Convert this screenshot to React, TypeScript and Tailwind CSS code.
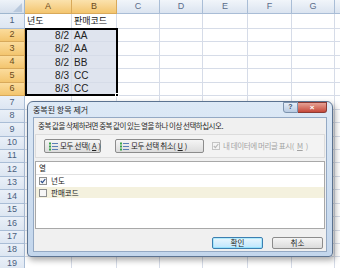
import React from 'react';

const cols = [
  { l: 'A', w: 'w-[47px]', sel: true },
  { l: 'B', w: 'w-[45px]', sel: true },
  { l: 'C', w: 'w-[43px]', sel: false },
  { l: 'D', w: 'w-[43px]', sel: false },
  { l: 'E', w: 'w-[45px]', sel: false },
  { l: 'F', w: 'w-[44px]', sel: false },
  { l: 'G', w: 'w-[43px]', sel: false },
];

const data: Record<number, [string, string]> = {
  1: ['년도', '판매코드'],
  2: ['8/2', 'AA'],
  3: ['8/2', 'AA'],
  4: ['8/2', 'BB'],
  5: ['8/3', 'CC'],
  6: ['8/3', 'CC'],
};

const kr = "font-['Noto_Sans_CJK_KR',sans-serif]";

const ListIcon = () => (
  <svg width="9" height="9" viewBox="0 0 9 9" className="shrink-0">
    <rect x="0" y="0.5" width="2" height="2" fill="#3aa34a" />
    <rect x="0" y="3.5" width="2" height="2" fill="#3aa34a" />
    <rect x="0" y="6.5" width="2" height="2" fill="#3aa34a" />
    <rect x="3" y="1" width="6" height="1" fill="#5b7fb5" />
    <rect x="3" y="4" width="6" height="1" fill="#5b7fb5" />
    <rect x="3" y="7" width="6" height="1" fill="#5b7fb5" />
  </svg>
);

const Check = ({ checked, disabled }: { checked?: boolean; disabled?: boolean }) => (
  <div
    className={`w-[8px] h-[8px] border flex items-center justify-center shrink-0 ${
      disabled ? 'border-[#c4c4c4] bg-[#f4f4f4]' : 'border-[#8e8f8f] bg-[#f6f6f6]'
    }`}
  >
    {checked && (
      <svg width="6" height="6" viewBox="0 0 6 6">
        <path d="M0.8 3 L2.4 4.7 L5.3 1" stroke={disabled ? '#b8b8b8' : '#2b4d8a'} strokeWidth="1.2" fill="none" />
      </svg>
    )}
  </div>
);

const Row = ({ n, h }: { n: number; h: string }) => {
  const rowSel = n >= 2 && n <= 6;
  const d = data[n];
  return (
    <div className={`flex ${h}`}>
      <div
        className={`w-[25px] shrink-0 flex items-center justify-center text-[9px] border-r border-b ${
          rowSel
            ? 'bg-gradient-to-b from-[#fbdc9c] to-[#f3c56e] text-[#6b4a1c] border-[#d8a95a]'
            : 'bg-gradient-to-b from-[#eaf0f8] to-[#dde6f2] text-[#4a5f80] border-[#a9bdd6]'
        }`}
      >
        {n}
      </div>
      {cols.map((c, i) => (
        <div
          key={c.l}
          className={`${c.w} shrink-0 border-r border-b border-[#d6dce8] flex items-center px-[2px] overflow-hidden whitespace-nowrap ${
            rowSel && i < 2 ? 'bg-[#dfe4ee]' : 'bg-white'
          } ${i === 0 && n > 1 ? 'justify-end' : ''}`}
        >
          {d && i < 2 && (
            <span className={n === 1 ? `text-[9px] text-[#222] ${kr}` : 'text-[10px] text-[#222]'}>{d[i]}</span>
          )}
        </div>
      ))}
      <div className="flex-1 bg-white border-b border-[#d6dce8]" />
    </div>
  );
};

const App: React.FC = () => {
  const rows = Array.from({ length: 18 }, (_, i) => i + 2);
  return (
    <div className="relative w-[340px] h-[268px] overflow-hidden bg-white font-['Liberation_Sans',sans-serif]">
      {/* Sheet */}
      <div className="flex flex-col">
        <div className="flex h-[14px]">
          <div className="w-[25px] shrink-0 bg-gradient-to-b from-[#eef3f9] to-[#d5dfec] border-r border-b border-[#9eb6ce] flex items-end justify-end">
            <div className="w-0 h-0 border-l-[9px] border-l-transparent border-b-[9px] border-b-[#b9c9dd] mr-[2px] mb-[1px]" />
          </div>
          {cols.map((c) => (
            <div
              key={c.l}
              className={`${c.w} shrink-0 flex items-center justify-center text-[9px] border-r border-b ${
                c.sel
                  ? 'bg-gradient-to-b from-[#fbe2ad] to-[#f3c56e] text-[#6b4a1c] border-[#d8a95a]'
                  : 'bg-gradient-to-b from-[#f1f5fa] to-[#dbe4f0] text-[#5a6d8a] border-[#a9bdd6]'
              }`}
            >
              {c.l}
            </div>
          ))}
          <div className="flex-1 bg-gradient-to-b from-[#f1f5fa] to-[#dbe4f0] border-b border-[#a9bdd6]" />
        </div>
        <Row n={1} h="h-[15px]" />
        {rows.map((n) => (
          <Row key={n} n={n} h="h-[13.44px]" />
        ))}
      </div>

      {/* Selection frame */}
      <div className="absolute left-[25px] top-[28px] w-[93px] h-[68px] border-2 border-black" />
      <div className="absolute left-[115px] top-[93px] w-[4px] h-[4px] bg-black border border-white" />

      {/* Dialog */}
      <div className="absolute left-[27px] top-[101px] w-[306px] h-[156px] rounded-t-[6px] rounded-b-[4px] border border-[#5c7391] bg-gradient-to-b from-[#dde9f6] to-[#c3d6ec] shadow-[2px_3px_6px_rgba(0,0,0,0.35)] flex flex-col px-[5px] pb-[4px]">
        <div className="h-[15px] flex items-center shrink-0">
          <span className={`text-[8px] text-[#1c1c1c] ${kr}`}>중복된 항목 제거</span>
          <div className="ml-auto flex self-start">
            <div className="w-[15px] h-[11px] rounded-bl-[3px] border border-[#7d93ae] bg-gradient-to-b from-[#e6eef8] to-[#b9cbe2] flex items-center justify-center text-[7px] text-[#3b4f6b] font-bold">
              ?
            </div>
            <div className="w-[29px] h-[11px] rounded-br-[3px] border border-l-0 border-[#8b3a34] bg-gradient-to-b from-[#e5a195] to-[#c5473a] flex items-center justify-center text-[8px] text-white font-bold">
              ×
            </div>
          </div>
        </div>
        <div className={`flex-1 bg-[#f0f0f0] border border-[#94a9c4] flex flex-col px-[1px] ${kr}`}>
          <div className="h-[16px] pl-[3px] pt-[2px] text-[7.5px] tracking-[-0.5px] text-[#2a2a2a] whitespace-nowrap">
            중복 값을 삭제하려면 중복 값이 있는 열을 하나 이상 선택하십시오.
          </div>
          <div className="h-[24px] border border-[#dcdcdc] bg-[#f3f3f3] flex items-center pl-[8px]">
            <div className="w-[57px] h-[14px] rounded-[2px] border border-[#8c8c8c] bg-gradient-to-b from-[#f5f5f5] to-[#dcdcdc] flex items-center pl-[4px] gap-[2px] text-[7.5px] tracking-[-0.3px] text-[#222] whitespace-nowrap">
              <ListIcon />
              모두 선택(<span className="underline">A</span>)
            </div>
            <div className="ml-[14px] w-[89px] h-[14px] rounded-[2px] border border-[#8c8c8c] bg-gradient-to-b from-[#f5f5f5] to-[#dcdcdc] flex items-center pl-[4px] gap-[2px] text-[7.5px] tracking-[-0.3px] text-[#222] whitespace-nowrap">
              <ListIcon />
              모두 선택 취소(<span className="underline">U</span>)
            </div>
            <div className="ml-[8px] flex items-center gap-[3px] text-[7.5px] tracking-[-0.4px] text-[#a3a3a3] whitespace-nowrap">
              <Check checked disabled />
              내 데이터에 머리글 표시(<span className="underline">M</span>)
            </div>
          </div>
          <div className="mt-[3px] h-[68px] bg-white border border-[#a8a8a8] flex flex-col text-[7.5px] text-[#222]">
            <div className="h-[13px] border-b border-[#e2e2e2] flex items-center pl-[3px]">열</div>
            <div className="h-[12px] flex items-center pl-[3px] gap-[4px]">
              <Check checked />
              년도
            </div>
            <div className="h-[11px] flex items-center pl-[3px] gap-[4px] bg-[#f4f1de]">
              <Check />
              판매코드
            </div>
          </div>
          <div className="mt-[8px] flex justify-end gap-[9px] pr-[2px]">
            <div className="w-[51px] h-[12px] rounded-[2px] border border-[#3c7fb1] bg-gradient-to-b from-[#eaf6fd] to-[#bee6fd] shadow-[inset_0_0_0_1px_#48d8fb55] flex items-center justify-center text-[7.5px] text-[#222]">
              확인
            </div>
            <div className="w-[51px] h-[12px] rounded-[2px] border border-[#8c8c8c] bg-gradient-to-b from-[#f5f5f5] to-[#dcdcdc] flex items-center justify-center text-[7.5px] text-[#222]">
              취소
            </div>
          </div>
        </div>
      </div>
    </div>
  );
};

export default App;
